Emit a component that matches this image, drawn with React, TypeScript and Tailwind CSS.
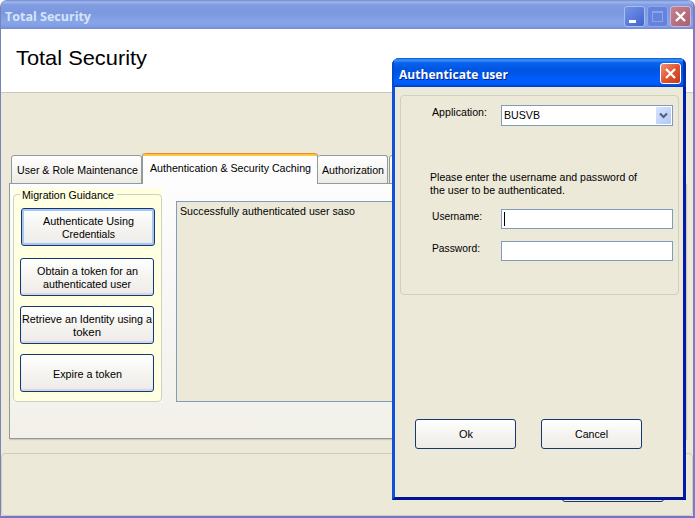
import type { ReactNode } from "react";

const btn =
  "flex shrink-0 items-center justify-center rounded-[3px] border border-[#123a70] bg-gradient-to-b from-white via-[#f5f4f0] to-[#eeecea] text-center";

function Cross() {
  return (
    <svg width="13" height="13" viewBox="0 0 13 13">
      <path d="M2 2L11 11M11 2L2 11" stroke="white" strokeWidth="2.3" />
    </svg>
  );
}

function Line({ w, children }: { w: string; children: ReactNode }) {
  return (
    <svg className={"block h-[13px] overflow-visible " + w}>
      <text x="0" y="10" textLength="100%" lengthAdjust="spacingAndGlyphs" fill="black">
        {children}
      </text>
    </svg>
  );
}

function TaskButton({ className, children }: { className: string; children: ReactNode }) {
  return (
    <button className={`${btn} h-[38px] w-[134px] flex-col pt-[2px] ${className}`}>
      {children}
    </button>
  );
}

function MainWindow() {
  return (
    <div className="isolate flex h-[518px] w-[695px] flex-col overflow-hidden rounded-t-[7px] border-b-2 border-l border-r-2 border-b-[#7675c9] border-l-[#7883b7] border-r-[#7b7acb] bg-[#ece9d8]">
      <header className="-ml-px -mr-0.5 flex h-[29px] shrink-0 items-center rounded-t-[7px] bg-[linear-gradient(#7189ce_0,#9db7ee_2px,#819bdf_5px,#7b98df_13px,#86a6e9_22px,#829fe3_26px,#7789d0_29px)] pl-[5px] pr-1 pt-[3px] shadow-[inset_1px_0_#7581bd]">
        <h1 className="flex-1 [font-family:'Open_Sans',sans-serif] text-[13px] font-bold">
          <svg className="block h-[18px] w-[86px] overflow-visible">
            <text x="0" y="14" textLength="86" lengthAdjust="spacingAndGlyphs" fill="#d8e4f8">Total Security</text>
          </svg>
        </h1>
        <div className="flex gap-[2px]">
          <button className="flex h-[21px] w-[21px] items-end rounded-[3px] border border-[#a9bdf1] bg-gradient-to-br from-[#7494e9] to-[#4164cf] pb-[3px] pl-1">
            <span className="h-[3px] w-[7px] bg-white" />
          </button>
          <button className="flex h-[21px] w-[21px] items-center justify-center rounded-[3px] border border-[#91a7e7] bg-[#6583dc]">
            <span className="h-[11px] w-[11px] border border-t-2 border-[#8da3e7]" />
          </button>
          <button className="flex h-[21px] w-[21px] items-center justify-center rounded-[3px] border border-[#ccb7d5] bg-gradient-to-br from-[#c7828d] to-[#a75f72]">
            <Cross />
          </button>
        </div>
      </header>

      <div className="flex h-[64px] shrink-0 border-b border-[#cbc8b9] bg-white pl-[15px] pt-[16px] text-[21px]">
        <svg className="block h-[26px] w-[131px] overflow-visible">
          <text x="0" y="20" textLength="131" lengthAdjust="spacingAndGlyphs">Total Security</text>
        </svg>
      </div>

      <main className="flex h-[360px] shrink-0 flex-col pl-2 pt-[60px]">
        <nav className="relative z-10 -mb-px flex h-[31px] shrink-0 items-end pl-0.5">
          <div className="flex h-[29px] w-[131px] items-center justify-center rounded-t-[3px] border border-[#919b9c] bg-gradient-to-b from-white to-[#edebe5] pl-0.5 pt-0.5">
            <Line w="w-[121px]">User &amp; Role Maintenance</Line>
          </div>
          <div className="flex h-[31px] w-[176px] flex-col items-center rounded-t-[3px] border-x border-[#919b9c] bg-[#fdfdfe]">
            <span className="h-[3px] w-full shrink-0 rounded-t-[3px] border-t border-[#e68b2c] bg-[#ffc73c]" />
            <span className="pt-[6px]">
              <Line w="w-[161px]">Authentication &amp; Security Caching</Line>
            </span>
          </div>
          <div className="flex h-[29px] w-[70px] items-center justify-center rounded-t-[3px] border border-l-0 border-[#919b9c] bg-gradient-to-b from-white to-[#edebe5] pt-0.5">
            <Line w="w-[62px]">Authorization</Line>
          </div>
          <div className="ml-px h-[29px] w-20 rounded-t-[3px] border border-[#919b9c] bg-gradient-to-b from-white to-[#edebe5]" />
        </nav>
        <section className="flex h-[256px] w-[677px] shrink-0 border border-[#919b9c] bg-gradient-to-b from-[#fdfdfe] to-[#f2f0e9] pl-[3px] pt-[4px] shadow-[1px_1px_1px_#cbc8bc]">
          <fieldset className="h-[214px] w-[149px] shrink-0 bg-[#ffffe1] pt-[6px]">
            <div className="flex h-[208px] flex-col rounded-[4px] border border-[#d0d0bf] pl-[6px]">
              <legend className="-mt-[6px] h-[13px] w-[97px] bg-[#ffffe1] px-0.5">
                <Line w="w-[92px]">Migration Guidance</Line>
              </legend>
              <TaskButton className="ml-px mt-[6px] shadow-[inset_0_0_0_2px_#a9c5f2]">
                <Line w="w-[91px]">Authenticate Using</Line>
                <Line w="w-[53px]">Credentials</Line>
              </TaskButton>
              <TaskButton className="mt-[12px] shadow-[inset_0_-2px_1px_#d5d8e3]">
                <Line w="w-[101px]">Obtain a token for an</Line>
                <Line w="w-[88px]">authenticated user</Line>
              </TaskButton>
              <TaskButton className="mt-[10px] shadow-[inset_0_-2px_1px_#d5d8e3]">
                <Line w="w-[130px]">Retrieve an Identity using a</Line>
                <Line w="w-[28px]">token</Line>
              </TaskButton>
              <TaskButton className="mt-[10px] shadow-[inset_0_-2px_1px_#d5d8e3]">
                <Line w="w-[69px]">Expire a token</Line>
              </TaskButton>
            </div>
          </fieldset>
          <div className="ml-[14px] mt-[13px] h-[201px] w-[480px] border border-[#7f9db9] bg-[#ece9d8] pl-[3px] pt-[3px]">
            <Line w="w-[175px]">Successfully authenticated user saso</Line>
          </div>
        </section>
      </main>

      <footer className="flex h-[63px] shrink-0 items-start justify-end rounded-[4px] border border-[#cfccbd] pr-[28px] pt-[18px]">
        <button className={`${btn} h-[30px] w-[102px]`} />
      </footer>
    </div>
  );
}

function Field({ label, w, className, children }: { label: string; w: string; className: string; children?: ReactNode }) {
  return (
    <label className="flex pl-[31px]">
      <span className="w-[69px] shrink-0 pt-[1px]">
        <Line w={w}>{label}</Line>
      </span>
      <span className={`flex w-[172px] shrink-0 border border-[#7f9db9] bg-white ${className}`}>{children}</span>
    </label>
  );
}

function AuthenticateDialog() {
  return (
    <div className="absolute left-[392px] top-[58px] z-20 flex h-[442px] w-[294px] flex-col overflow-hidden rounded-t-[7px] bg-[#0831b4]">
      <header className="flex h-[29px] shrink-0 items-center bg-[linear-gradient(#0755c8_0,#3d95ff_2px,#0862ed_5px,#0054df_12px,#005eff_22px,#005bf5_26px,#003dc5_29px)] pl-[7px] pr-[5px] pt-px shadow-[inset_2px_0_#064cc9,inset_-3px_0_#0032ad]">
        <h2 className="flex-1 [font-family:'Open_Sans',sans-serif] text-[13px] font-bold [text-shadow:1px_1px_#00238c]">
          <svg className="block h-[18px] w-[109px] overflow-visible">
            <text x="0" y="15" textLength="109" lengthAdjust="spacingAndGlyphs" fill="white">Authenticate user</text>
          </svg>
        </h2>
        <button className="flex h-[21px] w-[21px] items-center justify-center rounded-[3px] border border-white bg-gradient-to-br from-[#ef9273] via-[#e2532f] to-[#c53b15]">
          <Cross />
        </button>
      </header>
      <div className="flex flex-1 flex-col border-b-[3px] border-l-[3px] border-r-[3px] border-b-[#001495] border-l-[#1251d5] border-r-[#001bad]">
        <div className="flex flex-1 flex-col border-l border-[#e4e9ec] bg-[#ece9d8] pl-1 pt-2">
          <fieldset className="h-[200px] w-[279px] rounded-[4px] border border-[#d0d0bf] pt-[9px]">
            <Field label="Application:" w="w-[55px]" className="h-[21px] justify-between p-px">
              <span className="pl-px pt-[2px]">
                <Line w="w-[36px]">BUSVB</Line>
              </span>
              <span className="flex h-[17px] w-[15px] items-center justify-center rounded-[1px] bg-gradient-to-br from-[#d8e4fd] to-[#b3c8f6]">
                <svg width="9" height="7" viewBox="0 0 9 7">
                  <path d="M1 1.5L4.5 5L8 1.5" fill="none" stroke="#4d6185" strokeWidth="2.2" />
                </svg>
              </span>
            </Field>
            <div className="pb-[12px] pl-[29px] pt-[45px]">
              <Line w="w-[207px]">Please enter the username and password of</Line>
              <Line w="w-[135px]">the user to be authenticated.</Line>
            </div>
            <Field label="Username:" w="w-[50px]" className="h-5 pl-[2px] pt-[2px]">
              <span className="h-[14px] w-px bg-black" />
            </Field>
            <div className="h-3" />
            <Field label="Password:" w="w-[48px]" className="h-5" />
          </fieldset>
          <div className="flex gap-[25px] pl-[15px] pt-[124px]">
            <button className={`${btn} h-[30px] w-[101px]`}>
              <Line w="w-[14px]">Ok</Line>
            </button>
            <button className={`${btn} h-[30px] w-[101px]`}>
              <Line w="w-[33px]">Cancel</Line>
            </button>
          </div>
        </div>
      </div>
    </div>
  );
}

export default function App() {
  return (
    <div className="relative h-[518px] w-[695px] overflow-hidden bg-white [font-family:'Liberation_Sans',Arial,sans-serif] text-[11.5px] leading-[13px] text-black">
      <MainWindow />
      <AuthenticateDialog />
    </div>
  );
}
